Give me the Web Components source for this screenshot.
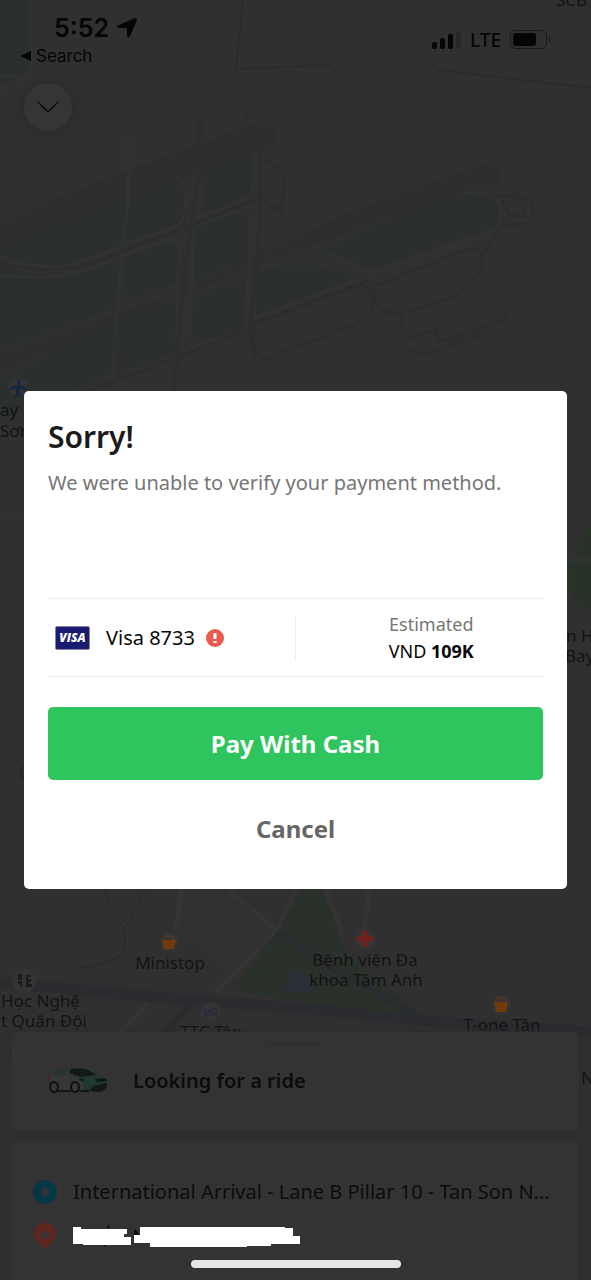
<!DOCTYPE html>
<html lang="en">
<head>
<meta charset="utf-8">
<meta name="viewport" content="width=device-width, initial-scale=1">
<title>Payment method</title>
<style>
body{margin:0;background:#303030;font-family:"Noto Sans","Open Sans",sans-serif;color:#0c0c0c}
</style>
</head>
<body>
<ride-screen></ride-screen>
<script>
const define=(name,html)=>customElements.define(name,class extends HTMLElement{
  constructor(){super();const t=document.createElement('template');t.innerHTML=html;
    this.attachShadow({mode:'open'}).append(t.content.cloneNode(true));}
});

define('city-map',`
<style>
:host{display:block;overflow:hidden}
svg{display:block;width:100%;height:100%}
.g{fill:#2b302c}.h{fill:none;stroke:#323233;stroke-width:3}.r{fill:none;stroke:#2d2d2e;stroke-width:3}
.l{fill:none;stroke:#29292a;stroke-width:1}
.t{font:17px "Noto Sans",sans-serif;fill:#131314;text-anchor:middle}
.s{text-anchor:start}
</style>
<svg viewBox="0 0 591 1280" preserveAspectRatio="xMidYMin slice" role="img" aria-label="Map">
<rect width="591" height="1280" fill="#303030"/>
<path class="g" d="M0 0H28V62Q28 76 14 80L0 84Z"/>
<path class="h" d="M31 0V66Q31 80 0 94M0 74Q18 80 28 76"/>
<path fill="#2e2e2f" d="M0 226L120 174 262 122Q278 122 277 138Q272 150 250 155L0 246ZM0 352L180 292 262 252 360 208 490 162Q503 166 501 178L498 188 380 222 260 264 0 372Z"/>
<path class="g" d="M0 247L120 202 176 180Q186 178 186 190V218Q186 226 170 230L122 248 75 266Q40 272 0 258ZM203 173L246 154Q252 152 252 160V190Q252 198 244 201L203 217ZM0 267Q45 278 75 272L120 256 115 308 0 350ZM125 254L165 242Q178 242 178 250V282L122 302ZM196 224Q200 219 238 213Q248 214 248 222V258L194 280ZM190 298L246 280 242 326 190 341ZM0 380L115 320 112 374 0 420ZM121 316L176 302 173 354 119 372ZM258 272Q312 256 352 279L256 316ZM322 250L420 208Q470 190 490 196Q505 212 493 228L460 237 370 270Q350 255 322 255Z"/>
<path class="h" d="M0 257Q45 272 75 264L122 246 172 228Q188 224 185 192Q184 180 176 178M0 276Q60 280 85 270L165 241Q180 239 180 250L176 300M198 170V218L244 200Q256 196 254 154M190 345L194 232Q198 220 238 212Q254 212 251 230L246 332L190 348M253 318L352 281M368 274L480 238Q510 225 498 200Q490 188 460 194M325 253Q350 258 370 274M128 130V206L122 246 116 320 112 384M30 416L175 356"/>
<path class="r" d="M200 120V170L190 232 182 300 174 390M260 150V190L258 260 250 325 254 360M0 264Q55 274 90 264L260 198 282 212 284 172 262 158M250 326L360 284Q374 290 372 306Q366 324 340 330L268 358Q252 358 254 340V328M375 286L465 250Q484 244 482 262Q478 285 450 298L400 314Q376 314 372 290M403 314Q396 326 408 340L440 328Q430 330 440 342L502 322 508 314M403 340Q404 352 424 354L480 335M496 196L528 198Q538 210 530 222L500 228 480 260M514 194Q528 204 524 216L510 216 498 194M35 412L252 328M245 112L250 128"/>
<path class="l" d="M243 0L236 69 328 65 408 124 422 137M372 12L438 70 591 88"/>
<path fill="none" stroke="#2c2c2d" d="M0 222L128 172 245 128M0 392L115 344M120 364L240 328M256 322L370 280"/>
<path d="M591 526L578 540V562H591ZM569 562H591V610Q576 610 569 588Z" fill="#293229"/>
<path class="h" d="M567 560H591M0 520L24 512"/>
<circle cx="30" cy="773" r="9" fill="none" stroke="#1d1d1e"/>
<path d="M182 885L175 930 240 985 275 930 230 892 268 885Z" fill="#32312f"/>
<path d="M306 885L275 935 232 990Q300 1004 420 1014L345 952 326 885Z" fill="#2a312b"/>
<path d="M294 970Q310 970 316 994L286 991Q282 980 294 970Z" fill="#293036"/>
<path fill="none" stroke="#343435" stroke-width="5" d="M228 890L277 930 215 992M277 930L297 885M182 885L176 930M324 885L344 938M370 885L364 930M148 1004L120 1034"/>
<path fill="none" stroke="#2a2c2f" stroke-width="11" d="M0 983L190 1000 300 1008 430 1021 591 1032"/>
<path fill="none" stroke="#2a2c2f" stroke-width="7" d="M277 932L330 966 372 990 426 1020M190 1003L165 1034"/>
<path class="l" d="M106 885V898L125 931V950Q120 962 80 968M146 888L124 930M0 1060L12 1055"/>
<g fill="#343434"><circle cx="18" cy="387" r="10"/><circle cx="169" cy="942" r="10"/><circle cx="24" cy="981" r="12"/><circle cx="211" cy="1012" r="10"/><circle cx="365" cy="939" r="10"/><circle cx="501" cy="1004" r="10"/></g>
<path d="M17 380q1-3 3 0v5l7 3v2l-7-1v5l2 2v1l-4-1-4 1v-1l2-2v-5l-6 1v-2l7-3Z" fill="#14293d"/>
<g fill="#713a0b"><path d="M162 940H176L174 949H164ZM494 1002H508L506 1012H496Z"/><path d="M164 941Q164 936 167 936H171Q174 936 174 941M496 1003Q496 998 499 998H503Q506 998 506 1003" fill="none" stroke="#713a0b"/></g>
<path d="M362 931H368V936H373V942H368V947H362V942H357V936H362Z" fill="#6b211e"/>
<path d="M18 974H22V980H18ZM18 981H22V987H20V984H18ZM26 975H31V977H28V979H31V982H29V984H32V987H26Z" fill="#1b1b1c"/>
<path d="M205 1008V1018M205 1015H217V1018M207 1015V1011H210V1013H217V1009H211V1012" fill="none" stroke="#25273e"/>
<g class="t">
<text class="s" x="556" y="6">SCB</text><text class="s" x="0" y="416">ay</text><text class="s" x="0" y="437">Sơn</text>
<text class="s" x="566" y="642">n H</text><text class="s" x="565" y="662">Bay</text>
<text x="170" y="969">Ministop</text><text x="365" y="966">Bệnh viện Đa</text><text x="366" y="986">khoa Tâm Anh</text>
<text class="s" x="1" y="1007">Học Nghệ</text><text class="s" x="1" y="1027">t Quân Đội</text>
<text x="211" y="1038">TTC Tân</text><text x="502" y="1031">T-one Tân</text><text class="s" x="581" y="1084">N</text>
<text x="183" y="885">Nguyễn</text>
</g>
</svg>`);

define('status-bar',`
<style>
:host{display:flex;justify-content:space-between;padding:12px 40px 0 20px;font-family:Inter,"Liberation Sans",sans-serif;color:#050505}
.time{display:flex;align-items:center;gap:8px;padding-left:34px;font-size:25px;line-height:32px;font-weight:600}
a{display:flex;align-items:center;gap:5px;color:inherit;text-decoration:none;font-size:17px;line-height:24px}
.net{display:flex;align-items:center;gap:9px;height:56px;font:500 19px/24px "Noto Sans",sans-serif}
svg{display:block}
</style>
<div><div class="time"><span>5:52</span><svg width="20" height="20" viewBox="0 0 20 20"><path d="M18 0Q20 0 20 2L13 18Q11 21 10 18V11Q10 10 9 10L2 10Q-2 9 2 7Z" fill="currentColor"/></svg></div>
<a href="#search"><svg width="11" height="12" viewBox="0 0 11 12"><path d="M11 1V11L0 6Z" fill="currentColor"/></svg>Search</a></div>
<div class="net"><svg width="30" height="18" viewBox="0 0 30 18" fill="currentColor"><rect x="1" y="11" width="5" height="7" rx="2"/><rect x="9" y="7" width="5" height="11" rx="2"/><rect x="17" y="3" width="5" height="15" rx="2"/><rect x="25" width="5" height="18" rx="2" fill="#272727"/></svg><span>LTE</span>
<svg width="41" height="20" viewBox="0 0 41 20"><rect x=".5" y=".5" width="36" height="18" rx="5" fill="none" stroke="#191919"/><rect x="3" y="3" width="23" height="13" rx="3" fill="currentColor"/><path d="M39 6Q41 9 39 13Z" fill="#111"/></svg></div>`);

define('round-button',`
<style>
:host{display:block}
button{display:grid;place-items:center;width:48px;height:48px;padding:0;border:0;border-radius:50%;background:#353535;color:#080808;box-shadow:0 1px 8px #282828}
</style>
<button type="button" aria-label="Collapse"><svg width="22" height="14" viewBox="0 0 22 14" fill="none" stroke="currentColor" stroke-width="1.5"><path d="M1 2L11 12 21 2"/></svg></button>`);

define('sheet-card',`
<style>
:host{display:block;box-sizing:border-box;border-radius:6px;background:#333;box-shadow:0 0 6px #2c2c2c}
</style><slot></slot>`);

define('ride-status',`
<style>
:host{display:flex;align-items:center;gap:24px;height:98px;padding-left:35px;position:relative;font-size:20px;line-height:28px;font-weight:600}
.grip{position:absolute;top:10px;left:50%;width:52px;height:4px;margin-left:-29px;border-radius:2px;background:#303031}
svg{display:block}
</style>
<span class="grip"></span>
<svg width="62" height="30" viewBox="0 0 62 30"><path d="M3 13L9 5Q12 3 20 3L40 3 52 9 44 25H6L2 22Z" fill="#363837"/><path d="M7 9Q10 3 18 3H40L43 5 22 5 12 9Z" fill="#22352c"/><path d="M24 3Q36 1 43 5L50 9 34 11Q26 9 22 7Z" fill="#101a16"/><path d="M9 9L24 8 30 11M24 9V21" fill="none" stroke="#2a2e2c"/><path d="M31 12L49 9 58 12 60 17Q59 24 52 26L36 25 37 18Z" fill="#1e392d"/><path d="M31 12L37 13 36 16Z" fill="#111714"/><path d="M46 20L60 17 59 22Q56 26 50 26L43 25Z" fill="#111815"/><path d="M48 13L58 12 60 15 50 16Z" fill="#101713"/><g fill="#363837" stroke="#0d100f" stroke-width="2"><ellipse cx="7" cy="21" rx="4" ry="5"/><ellipse cx="28" cy="21" rx="4" ry="5"/></g><path d="M11 25H24M32 25H42" stroke="#131615" stroke-width="2"/><path d="M1 11L3 10V15L1 16Z" fill="#5b1c29"/></svg>
<span>Looking for a ride</span>`);

define('trip-stop',`
<style>
:host{display:grid;grid-template-columns:24px 1fr;gap:16px;align-items:center;height:44px;font-size:20px;line-height:28px;white-space:nowrap}
::slotted(svg){display:block}
</style><slot name="icon"></slot><span><slot></slot></span>`);

define('trip-sheet',`
<style>
:host{display:grid;gap:11px;padding:0 12px;position:relative}
.stops{padding:29px 20px 22px 21px;border-radius:6px 6px 0 0}
.home{position:absolute;left:50%;bottom:12px;width:210px;height:8px;margin-left:-105px;border-radius:4px;background:#e6e6e6}
</style>
<sheet-card><ride-status></ride-status></sheet-card>
<sheet-card class="stops">
<trip-stop><svg slot="icon" width="24" height="24" viewBox="0 0 24 24"><circle cx="12" cy="12" r="8" fill="none" stroke="#033844" stroke-width="8"/></svg>International Arrival - Lane B Pillar 10 - Tan Son N...</trip-stop>
<trip-stop><svg slot="icon" width="24" height="28" viewBox="0 0 24 28"><path d="M12 1A11 11 0 0 1 23 12Q23 17 14 25L12 27 10 25Q1 17 1 12A11 11 0 0 1 12 1Z" fill="#5e261f"/><circle cx="12" cy="13" r="4" fill="#3a3535"/></svg><svg width="230" height="22" viewBox="2 -1 230 22" role="img" aria-label="Hidden address"><path d="M64 4V16M64 4L69 12M38 0L37 2M33 18L34 20" stroke="#080808" stroke-width="2"/><path d="M0 1H10V3H56V8H53V11H60V19H12V18H0V11H2V9H0ZM69 1H214V2H222V10H229V18H200V20H176V22H79V17H63V9H69Z" fill="#fff"/></svg></trip-stop>
</sheet-card>
<div class="home"></div>`);

define('payment-row',`
<style>
:host{display:grid;grid-template-columns:1fr 1fr;align-items:center;height:77px;border:solid #ebebeb;border-width:1px 0;color:#080808}
.card{display:flex;align-items:center;box-sizing:border-box;height:45px;padding-left:7px;border-right:1px solid #ececec;font-size:20px}
.brand{display:grid;place-items:center;box-sizing:border-box;width:35px;height:24px;margin-right:16px;border:1px solid #8486a8;border-radius:2px;background:#191b70;color:#fff;font:italic 800 12px/22px "Open Sans",sans-serif}
.card svg{margin-left:10px}
.sum{padding-left:24px;text-align:center;font-size:18px;line-height:27px}
.sum span{display:block;color:#767676}
</style>
<div class="card"><span class="brand">VISA</span><span>Visa 8733</span>
<svg width="20" height="20" viewBox="0 0 20 20" role="img" aria-label="Problem"><circle cx="10" cy="10" r="9" fill="#e95b51"/><path d="M10 5V11M10 13V15" stroke="#fff" stroke-width="3"/></svg></div>
<div class="sum"><span>Estimated</span>VND <b>109K</b></div>`);

define('action-button',`
<style>
:host{display:block}
button{display:block;width:100%;height:48px;padding:0;border:0;background:none;color:#666;font:700 24px/32px "Noto Sans",sans-serif}
:host([primary]) button{height:73px;border-radius:5px;background:#2ec55e;color:#fff}
</style><button type="button"><slot></slot></button>`);

define('payment-dialog',`
<style>
:host{display:block;box-sizing:border-box;padding:24px 24px 36px;border-radius:5px;background:#fff}
h1{margin:0 0 8px;font-size:30px;line-height:44px;font-weight:600;color:#1b1b1b}
p{margin:0 0 99px;font-size:20px;line-height:32px;color:#767676}
action-button{margin-top:25px}
action-button[primary]{margin-top:30px}
</style>
<h1>Sorry!</h1><p>We were unable to verify your payment method.</p>
<payment-row></payment-row>
<action-button primary>Pay With Cash</action-button>
<action-button>Cancel</action-button>`);

define('ride-screen',`
<style>
:host{display:flex;flex-direction:column;position:relative;min-height:100vh;overflow:hidden}
city-map{position:absolute;inset:0}
status-bar,trip-sheet,round-button{position:relative}
round-button{margin:15px 24px}
trip-sheet{margin-top:auto}
.overlay{position:absolute;inset:0;display:grid;align-items:center;padding:0 24px}
</style>
<city-map></city-map>
<status-bar></status-bar>
<round-button></round-button>
<trip-sheet></trip-sheet>
<div class="overlay"><payment-dialog role="dialog" aria-modal="true" aria-label="Sorry!"></payment-dialog></div>`);
</script>
</body>
</html>
